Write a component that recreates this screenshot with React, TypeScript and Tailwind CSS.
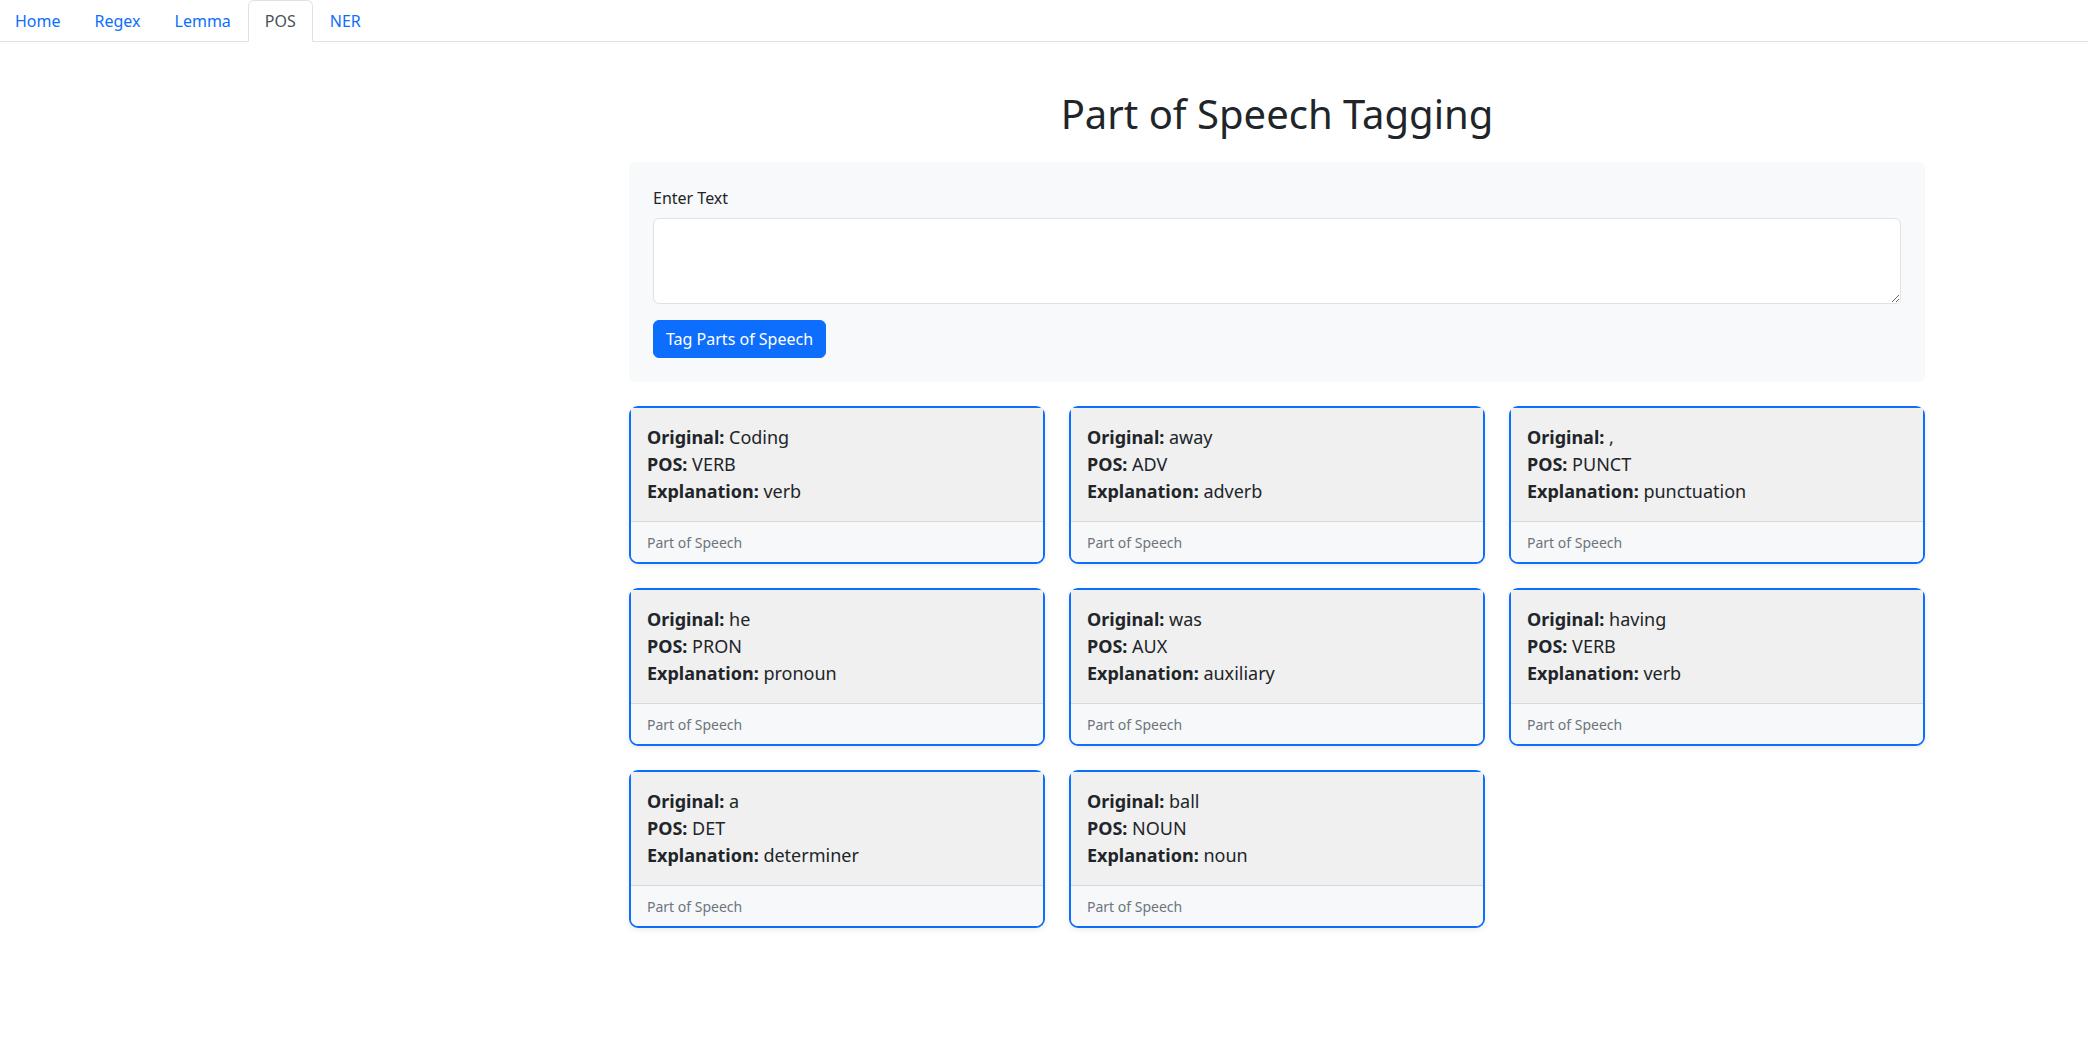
import React from "react";

const items = [
  { o: "Coding", p: "VERB", e: "verb" },
  { o: "away", p: "ADV", e: "adverb" },
  { o: ",", p: "PUNCT", e: "punctuation" },
  { o: "he", p: "PRON", e: "pronoun" },
  { o: "was", p: "AUX", e: "auxiliary" },
  { o: "having", p: "VERB", e: "verb" },
  { o: "a", p: "DET", e: "determiner" },
  { o: "ball", p: "NOUN", e: "noun" },
];

const tabs = ["Home", "Regex", "Lemma", "POS", "NER"];

export default function App() {
  return (
    <div
      className="min-h-[1056px] bg-white text-[#212529] text-[16px] leading-6"
      style={{ fontFamily: '"Noto Sans", "DejaVu Sans", sans-serif' }}
    >
      <ul className="flex border-b border-[#dee2e6] list-none m-0 p-0">
        {tabs.map((t, i) => {
          const active = t === "POS";
          return (
            <li key={t} className={i === 0 ? "-mb-px -ml-[2px]" : "-mb-px"}>
              <a
                href="#"
                className={
                  active
                    ? "block px-4 py-2 border border-[#dee2e6] border-b-white rounded-t-[6px] bg-white text-[#495057]"
                    : "block px-4 py-2 border border-transparent text-[#0d6efd]"
                }
              >
                {t}
              </a>
            </li>
          );
        })}
      </ul>

      <div className="ml-[629px] w-[1296px]">
        <h1 className="mt-12 mb-6 text-center text-[40px] leading-[48px] font-normal">
          Part of Speech Tagging
        </h1>

        <div className="bg-[#f8f9fa] rounded-[6px] p-6 mb-6">
          <label className="block mb-2">Enter Text</label>
          <textarea
            rows={3}
            className="block w-full h-[86px] px-3 py-1.5 bg-white border border-[#dee2e6] rounded-[6px] mb-4 outline-none"
          />
          <button className="bg-[#0d6efd] text-white px-3 py-1.5 rounded-[6px] border border-[#0d6efd]">
            Tag Parts of Speech
          </button>
        </div>

        <div className="grid grid-cols-3 gap-6">
          {items.map((it, i) => (
            <div
              key={i}
              className="border-2 border-[#0d6efd] rounded-[9px] bg-white shadow-[0_2px_6px_rgba(0,0,0,0.08)]"
            >
              <div className="bg-[#f0f0f0] p-4 text-[18px] leading-[27px]">
                <div>
                  <b className="font-bold">Original:</b> {it.o}
                </div>
                <div>
                  <b className="font-bold">POS:</b> {it.p}
                </div>
                <div>
                  <b className="font-bold">Explanation:</b> {it.e}
                </div>
              </div>
              <div className="bg-[#f7f8f9] border-t border-[#d9d9d9] px-4 pt-2 pb-[7px] rounded-b-[7px]">
                <span className="text-[14px] text-[#6c757d]">Part of Speech</span>
              </div>
            </div>
          ))}
        </div>
      </div>
    </div>
  );
}
